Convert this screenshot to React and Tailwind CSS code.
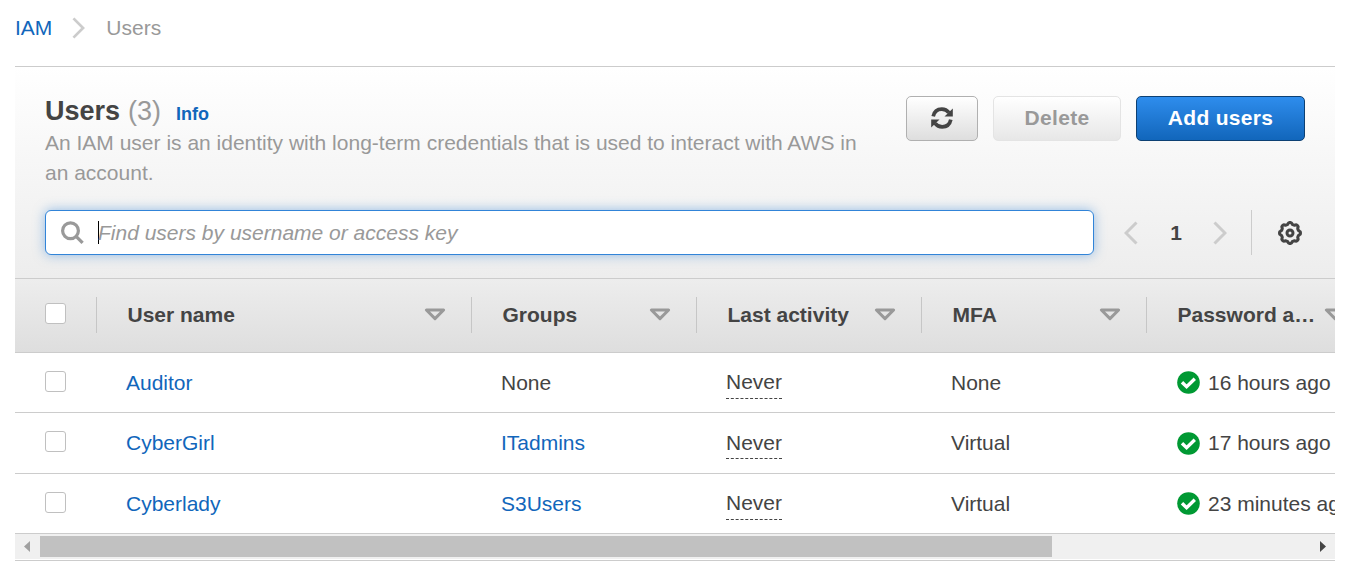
import React from "react";

const columns = [
  { label: "User name", width: "w-[375px]" },
  { label: "Groups", width: "w-[225px]" },
  { label: "Last activity", width: "w-[225px]" },
  { label: "MFA", width: "w-[225px]" },
  { label: "Password a…", width: "w-[225px]" },
];

const users = [
  { name: "Auditor", group: "None", linked: false, mfa: "None", age: "16 hours ago", height: "h-[60px]", check: "pb-[2px]", never: "top-0 leading-[32px]" },
  { name: "CyberGirl", group: "ITadmins", linked: true, mfa: "Virtual", age: "17 hours ago", height: "h-[61px]", check: "pb-[4px]", never: "top-[-1px] leading-[34px]" },
  { name: "Cyberlady", group: "S3Users", linked: true, mfa: "Virtual", age: "23 minutes ago", height: "h-[60px]", check: "pb-[2px]", never: "top-0 leading-[32px]" },
];

function Chevron({ left, className }) {
  return (
    <svg className={className} viewBox="0 0 14 24" fill="none" stroke="#ccc" strokeWidth="3">
      <path d={left ? "M12.5 1.5 2 12l10.5 10.5" : "M1.5 1.5 12 12 1.5 22.5"} />
    </svg>
  );
}

function Checkbox() {
  return <span className="block size-[21px] shrink-0 rounded-[3px] border border-[#c0c0c0] bg-white" />;
}

function SortIcon() {
  return (
    <svg className="h-[13px] w-[22px] shrink-0" viewBox="0 0 22 13" fill="none" stroke="#999" strokeWidth="3" strokeLinejoin="round">
      <path d="M2.4 2h17.2L11 10.6Z" />
    </svg>
  );
}

function RefreshIcon() {
  return (
    <svg className="size-6" viewBox="0 0 24 24" fill="none" stroke="#444" strokeWidth="3.7">
      <path d="M3.200 10.400C4.200 5.600 7.600 3.200 11.800 3.200c3 0 5.300 1.100 7.100 3.500" />
      <path d="M22.800 2.500v8h-8.300Z" fill="#444" stroke="none" />
      <path d="M20.800 13.600C19.800 18.400 16.400 20.800 12.200 20.800c-3 0-5.300-1.100-7.100-3.500" />
      <path d="M1.200 21.500v-8h8.300Z" fill="#444" stroke="none" />
    </svg>
  );
}

function GearIcon() {
  const points = Array.from({ length: 96 }, (_, i) => {
    const angle = (i / 96) * Math.PI * 2;
    const r = 9.6 + 0.9 * Math.tanh(2 * Math.cos(8 * angle));
    return `${(12 + r * Math.cos(angle)).toFixed(2)},${(12 + r * Math.sin(angle)).toFixed(2)}`;
  }).join(" ");
  return (
    <svg className="size-6" viewBox="0 0 24 24" fill="none" stroke="#444" strokeWidth="3">
      <polygon points={points} strokeLinejoin="round" />
      <circle cx="12" cy="12" r="3" />
    </svg>
  );
}

function CheckIcon() {
  return (
    <svg className="ml-[0.5px] size-[23px] shrink-0" viewBox="0 0 23 23">
      <circle cx="11.500" cy="11.500" r="11.300" fill="#093" />
      <path d="m5 11.200 4.600 4.500 8.200-7.900" fill="none" stroke="#fff" strokeWidth="3.4" />
    </svg>
  );
}

export default function App() {
  return (
    <main className="h-[562px] w-[1362px] overflow-hidden bg-white px-[15px] font-['Liberation_Sans',Arial,sans-serif] text-[21px] leading-[30px] text-[#444]">
      <nav className="flex h-[66px] items-start pt-[13px]">
        <a className="text-[#1166bb]">IAM</a>
        <Chevron className="mt-[4px] ml-[20px] h-[22px] w-[13px]" />
        <span className="ml-[21px] text-[#999]">Users</span>
      </nav>

      <section className="w-[1320px] border-t border-b border-[#ccc]">
        <header className="h-[211px] bg-linear-to-b from-white to-[#ededed] px-[30px] pt-[29px]">
          <div className="flex h-[114px] items-start justify-between">
            <div className="w-[830px]">
              <h1 className="flex h-[32px] items-baseline text-[27px] font-bold leading-[30px]">
                Users
                <span className="ml-[8px] font-normal text-[#999]">(3)</span>
                <a className="ml-[15px] text-[18px] text-[#1166bb]">Info</a>
              </h1>
              <p className="text-[#999]">
                An IAM user is an identity with long-term credentials that is used to interact with AWS in
                <br />
                an account.
              </p>
            </div>
            <div className="flex gap-[15px] font-bold tracking-[0.3px]">
              <button className="flex h-[45px] w-[72px] items-center justify-center rounded-[5px] border border-[#b0b0b0] bg-linear-to-b from-white to-[#dedede] pb-px">
                <RefreshIcon />
              </button>
              <button className="h-[45px] w-[128px] rounded-[5px] border border-[#e4e4e4] bg-linear-to-b from-white to-[#e7e7e7] pb-[2px] text-[#999]">
                Delete
              </button>
              <button className="h-[45px] w-[169px] rounded-[5px] border border-[#0d4073] bg-linear-to-b from-[#2e8ded] to-[#1166bb] pb-[2px] text-white">
                Add users
              </button>
            </div>
          </div>

          <div className="flex h-[45px] items-center">
            <div className="flex h-[45px] w-[1049px] items-center rounded-[6px] border border-[#3184d8] bg-white shadow-[0_0_12px_rgba(49,132,216,0.5)]">
              <svg className="ml-[15px] size-6" viewBox="0 0 24 24" fill="none" stroke="#999" strokeWidth="3.200">
                <circle cx="9.500" cy="9.700" r="7.900" />
                <path d="m15.100 15.300 6.500 6.500" />
              </svg>
              <span className="ml-[13px] h-[23px] w-px bg-black" />
              <span className="-ml-px italic text-[#999]">Find users by username or access key</span>
            </div>
            <Chevron left className="ml-[30px] h-6 w-[14px]" />
            <span className="ml-[32px] w-[12px] text-center font-bold">1</span>
            <Chevron className="ml-[31px] h-6 w-[14px]" />
            <span className="ml-[24px] h-[45px] w-px bg-[#ccc]" />
            <span className="ml-[26px]">
              <GearIcon />
            </span>
          </div>
        </header>

        <div className="overflow-hidden">
          <div className="flex h-[75px] w-[1356px] items-center border-y border-[#ccc] bg-linear-to-b from-[#ededed] to-[#dedede] pb-[2px] font-bold">
            <div className="w-[81px] pb-[3px] pl-[30px]">
              <Checkbox />
            </div>
            {columns.map((c) => (
              <div key={c.label} className={`flex h-[36px] shrink-0 items-center border-l border-[#c6c6c6] pl-[30.5px] ${c.width}`}>
                <span className={c.label === "Password a…" ? "w-[146.5px] shrink-0 whitespace-nowrap" : "flex-1"}>{c.label}</span>
                <span className="mr-[25px]">
                  <SortIcon />
                </span>
              </div>
            ))}
          </div>

          {users.map((u) => (
            <div key={u.name} className={`flex w-[1500px] items-center border-b border-[#ccc] ${u.height}`}>
              <div className={`w-[111px] pl-[30px] ${u.check}`}>
                <Checkbox />
              </div>
              <a className="w-[375px] text-[#1166bb]">{u.name}</a>
              <span className={u.linked ? "w-[225px] text-[#1166bb]" : "w-[225px]"}>{u.group}</span>
              <div className="h-[33px] w-[225px]">
                <span className={`relative block h-[33px] w-fit border-b border-dashed border-[#444] ${u.never}`}>Never</span>
              </div>
              <span className="w-[225px]">{u.mfa}</span>
              <span className="flex items-center gap-[8.5px] whitespace-nowrap">
                <CheckIcon />
                {u.age}
              </span>
            </div>
          ))}
        </div>

        <div className="mb-px flex h-[25px] items-center bg-[#f0f0f0]">
          <svg className="ml-[9px] h-[11px] w-[6px]" viewBox="0 0 6 11" fill="#a0a0a0">
            <path d="M6 0v11L0 5.500Z" />
          </svg>
          <div className="ml-[10px] h-[21px] w-[1012px] bg-[#c1c1c1]" />
          <svg className="ml-[268px] h-[11px] w-[6px]" viewBox="0 0 6 11" fill="#444">
            <path d="M0 0v11l6-5.500Z" />
          </svg>
        </div>
      </section>
    </main>
  );
}
